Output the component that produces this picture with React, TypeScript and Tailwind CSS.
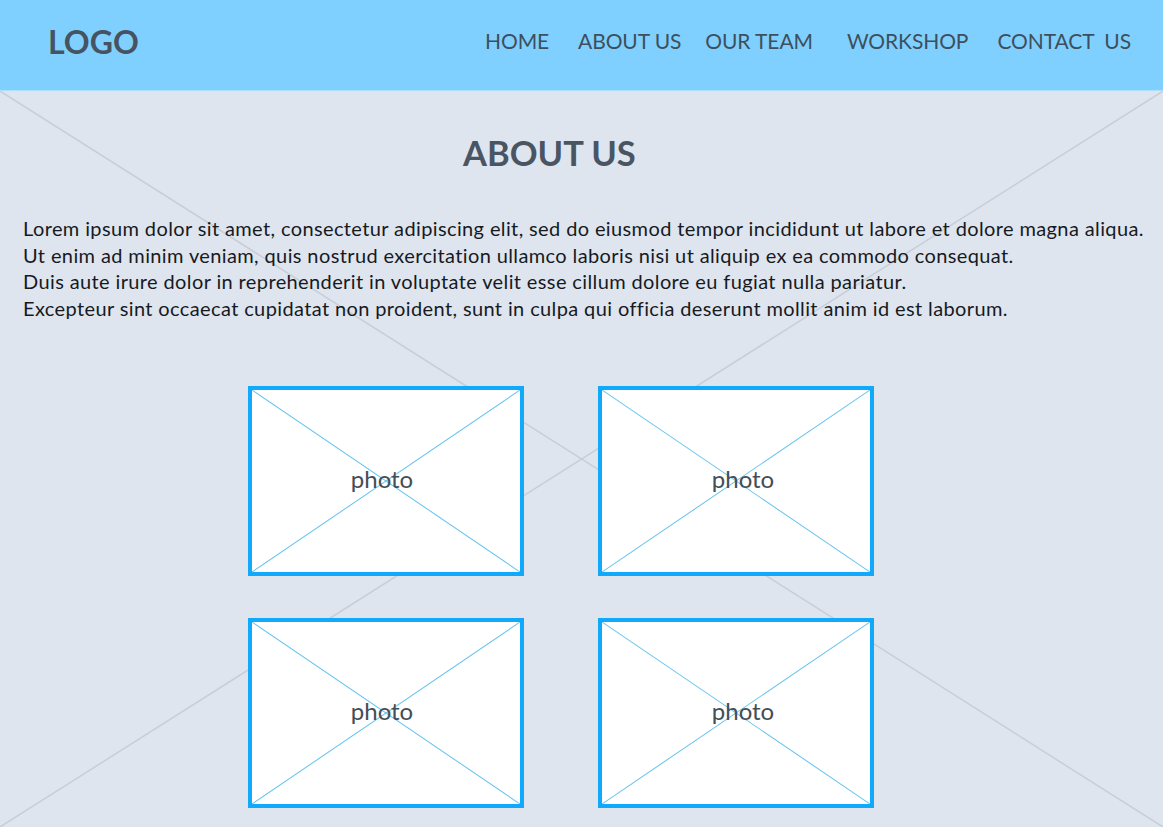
import React from "react";

const NAV = [
  { label: "HOME", cls: "" },
  { label: "ABOUT US", cls: "ml-[29px]" },
  { label: "OUR TEAM", cls: "ml-[24px]" },
  { label: "WORKSHOP", cls: "ml-[34px]" },
  { label: "CONTACT\u00a0 US", cls: "ml-[29px]" },
];

const LINES = [
  "Lorem ipsum dolor sit amet, consectetur adipiscing elit, sed do eiusmod tempor incididunt ut labore et dolore magna aliqua.",
  "Ut enim ad minim veniam, quis nostrud exercitation ullamco laboris nisi ut aliquip ex ea commodo consequat.",
  "Duis aute irure dolor in reprehenderit in voluptate velit esse cillum dolore eu fugiat nulla pariatur.",
  "Excepteur sint occaecat cupidatat non proident, sunt in culpa qui officia deserunt mollit anim id est laborum.",
];

// Placeholder cross, as in a wireframe
const Cross: React.FC<{ stroke: string; width: number }> = ({ stroke, width }) => (
  <svg
    className="absolute inset-0 w-full h-full pointer-events-none"
    viewBox="0 0 100 100"
    preserveAspectRatio="none"
    aria-hidden="true"
  >
    <line x1="0" y1="0" x2="100" y2="100" stroke={stroke} strokeWidth={width} vectorEffect="non-scaling-stroke" />
    <line x1="0" y1="100" x2="100" y2="0" stroke={stroke} strokeWidth={width} vectorEffect="non-scaling-stroke" />
  </svg>
);

const Photo: React.FC<{ shift: string }> = ({ shift }) => (
  <div className="relative w-[276px] h-[190px] bg-white border-4 border-[#11a9fb] flex items-center justify-center">
    <Cross stroke="#62c3ee" width={1} />
    <span className={`relative text-[24px] leading-none text-[#454d57] -translate-y-[2px] ${shift}`}>photo</span>
  </div>
);

export default function App() {
  return (
    <div className="w-[1163px] h-[827px] overflow-hidden bg-[#dfe5ee] font-['Lato','Liberation_Sans',sans-serif]">
      {/* ── Header ─────────────────────────────────────────── */}
      <header className="h-[91px] bg-[#80d0ff] border-b border-[#aee0fb] flex items-center justify-between pl-[48px] pr-[32px]">
        <div className="text-[32px] font-bold text-[#465362] leading-none -mt-[6px]">LOGO</div>
        <nav className="flex items-center -mt-[10px]">
          {NAV.map((n) => (
            <a key={n.label} className={`text-[21px] text-[#3d4f5d] leading-none tracking-[-0.1px] ${n.cls}`}>
              {n.label}
            </a>
          ))}
        </nav>
      </header>

      {/* ── Main ───────────────────────────────────────────── */}
      <main className="relative h-[736px]">
        <Cross stroke="#c8ced8" width={1.5} />
        <div className="relative pt-[40px]">
          <h1 className="pl-[463px] text-[34.5px] leading-[44px] font-bold text-[#4a5563]">ABOUT US</h1>
          <div className="mt-[40px] pl-[23px] text-[20px] leading-[26.5px] tracking-[0.38px] text-[#161a1f]">
            {LINES.map((l) => (
              <p key={l}>{l}</p>
            ))}
          </div>
          <div className="mt-[65px] pl-[248px] grid grid-cols-[276px_276px] gap-x-[74px] gap-y-[42px]">
            <Photo shift="-translate-x-[4px]" />
            <Photo shift="translate-x-[7px]" />
            <Photo shift="-translate-x-[4px]" />
            <Photo shift="translate-x-[7px]" />
          </div>
        </div>
      </main>
    </div>
  );
}
